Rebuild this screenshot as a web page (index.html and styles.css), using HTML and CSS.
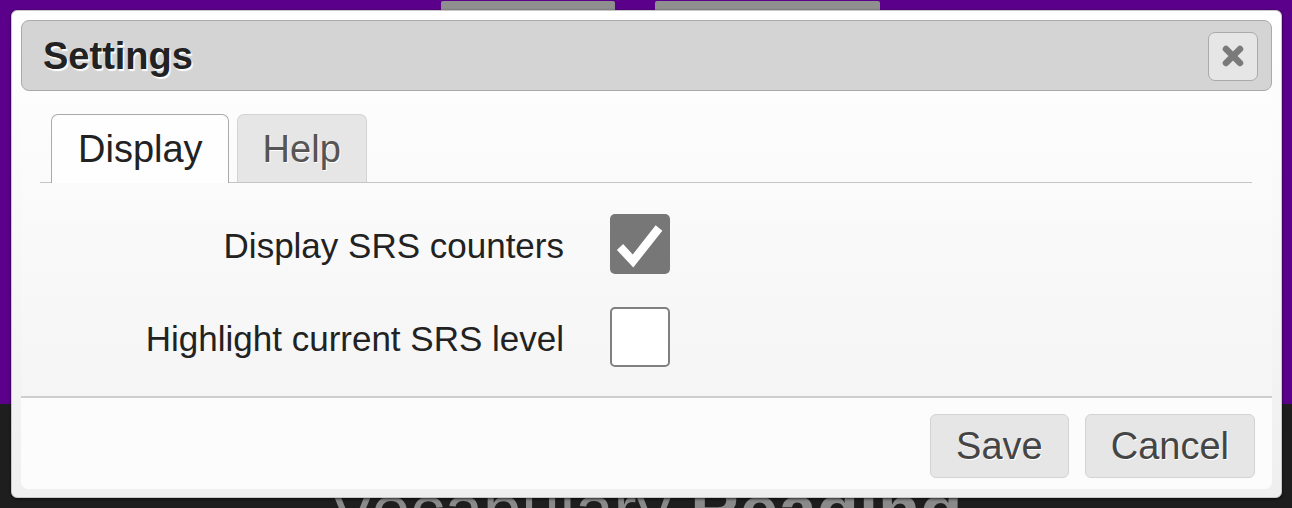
FILE: index.html
```html
<!DOCTYPE html>
<html lang="en">
<head>
<meta charset="utf-8">
<title>Settings</title>
<link rel="stylesheet" href="styles.css">
</head>
<body>
<div class="page">
  <header class="top">
    <nav class="nav">
      <span class="nav-item nav-item-a"></span>
      <span class="nav-item nav-item-b"></span>
    </nav>
  </header>
  <main class="dark">
    <h1 class="heading">Vocabulary <b>Reading</b></h1>
  </main>
</div>

<div class="dialog" role="dialog">
  <div class="titlebar">
    <span class="title">Settings</span>
    <button class="close" aria-label="close">
      <svg width="24" height="24" viewBox="0 0 24 24">
        <path d="M5 5 L19 19 M19 5 L5 19" stroke="#7a7a7a" stroke-width="6.5" stroke-linecap="round" fill="none"/>
      </svg>
    </button>
  </div>
  <div class="panel">
    <div class="content">
      <ul class="tabs">
        <li class="tab tab-active">Display</li>
        <li class="tab">Help</li>
      </ul>
      <div class="rows">
        <label class="label">Display SRS counters</label>
        <span class="check check-on">
          <svg width="60" height="60" viewBox="0 0 60 60">
            <polyline points="10,33 23,47 49,14" stroke="#fff" stroke-width="8.5" fill="none" stroke-linejoin="miter"/>
          </svg>
        </span>
        <label class="label">Highlight current SRS level</label>
        <span class="check check-off"></span>
      </div>
    </div>
    <div class="buttonpane">
      <button class="btn">Save</button>
      <button class="btn">Cancel</button>
    </div>
  </div>
</div>
</body>
</html>
```

FILE: styles.css
```css
html, body {
  margin: 0;
  padding: 0;
}
body {
  width: 1292px;
  height: 508px;
  overflow: hidden;
  position: relative;
  font-family: "Liberation Sans", Arial, sans-serif;
  background: #1e1e1e;
}
.page {
  display: flex;
  flex-direction: column;
}
.top {
  height: 404px;
  background: #5b008a;
}
.nav {
  display: flex;
  gap: 40px;
  padding-left: 441px;
  padding-top: 1px;
}
.nav-item {
  display: block;
  height: 40px;
  background: #8f8f8f;
  border-radius: 2px;
}
.nav-item-a { width: 174px; }
.nav-item-b { width: 225px; }

.dark {
  background: #1e1e1e;
  padding-top: 71px;
}
.heading {
  margin: 0;
  text-align: center;
  font-size: 69px;
  line-height: 1;
  font-weight: normal;
  color: #8a8a8a;
}
.heading b {
  font-weight: bold;
}

/* dialog */
.dialog {
  position: absolute;
  left: 11px;
  top: 10px;
  width: 1271px;
  height: 488px;
  box-sizing: border-box;
  border: 1px solid #c8c8c8;
  border-radius: 6px;
  background: linear-gradient(#ffffff, #efefef);
  padding: 9px 9px 8px;
  display: flex;
  flex-direction: column;
  box-shadow: 0 1px 3px rgba(0, 0, 0, 0.7);
}
.titlebar {
  height: 71px;
  flex: none;
  box-sizing: border-box;
  border: 1px solid #aaaaaa;
  border-radius: 8px;
  background: #d4d4d4;
  display: flex;
  align-items: center;
  justify-content: space-between;
  padding: 0 13px 0 21px;
}
.title {
  font-size: 38px;
  line-height: 44px;
  font-weight: bold;
  color: #222222;
  text-shadow: 1.5px 1.5px 1px #ffffff;
}
.close {
  width: 50px;
  height: 49px;
  box-sizing: border-box;
  border: 1px solid #aaaaaa;
  border-radius: 7px;
  background: #e6e6e6;
  padding: 0;
  margin-top: 1px;
  display: flex;
  align-items: center;
  justify-content: center;
}
.close svg {
  display: block;
  filter: blur(0.4px);
}

.panel {
  flex: 1;
  display: flex;
  flex-direction: column;
  border-radius: 0 0 7px 7px;
  overflow: hidden;
}
.content {
  height: 305px;
  box-sizing: border-box;
  padding: 23px 20px 0 19px;
  background: linear-gradient(#fdfdfd, #f5f5f5);
}
.tabs {
  list-style: none;
  margin: 0;
  padding: 0 0 0 11px;
  display: flex;
  align-items: flex-end;
  gap: 8px;
  border-bottom: 1px solid #c5c5c5;
}
.tab {
  font-size: 38px;
  line-height: 44px;
  padding: 12px 25px 11px;
  border: 1px solid #d3d3d3;
  border-bottom: 0;
  border-radius: 7px 7px 0 0;
  background: #e6e6e6;
  color: #555555;
  text-shadow: 1px 1px 0 #ffffff;
}
.tab-active {
  background: #fefefe;
  border-color: #aaaaaa;
  color: #222222;
  padding-bottom: 12px;
  margin-bottom: -1px;
  padding-left: 26px;
  text-shadow: none;
}
.rows {
  display: grid;
  grid-template-columns: 524px 60px;
  column-gap: 46px;
  row-gap: 33px;
  align-items: center;
  margin-top: 31px;
}
.label {
  font-size: 35px;
  line-height: 40px;
  text-align: right;
  color: #222222;
  padding-top: 4px;
}
.check {
  display: block;
  width: 60px;
  height: 60px;
  box-sizing: border-box;
  border-radius: 5px;
}
.check svg {
  display: block;
}
.check-on {
  background: #777777;
}
.check-off {
  background: #ffffff;
  border: 2px solid #808080;
}

.buttonpane {
  flex: 1;
  border-top: 2px solid #cecece;
  background: #fcfcfc;
  display: flex;
  justify-content: flex-end;
  align-items: flex-start;
  gap: 16px;
  padding: 16px 17px 0;
}
.btn {
  font-family: "Liberation Sans", Arial, sans-serif;
  font-size: 38px;
  line-height: 44px;
  padding: 9px 25px;
  border: 1px solid #d3d3d3;
  border-radius: 6px;
  background: #e6e6e6;
  color: #454545;
  text-shadow: 1px 1px 0 #ffffff;
}
```
